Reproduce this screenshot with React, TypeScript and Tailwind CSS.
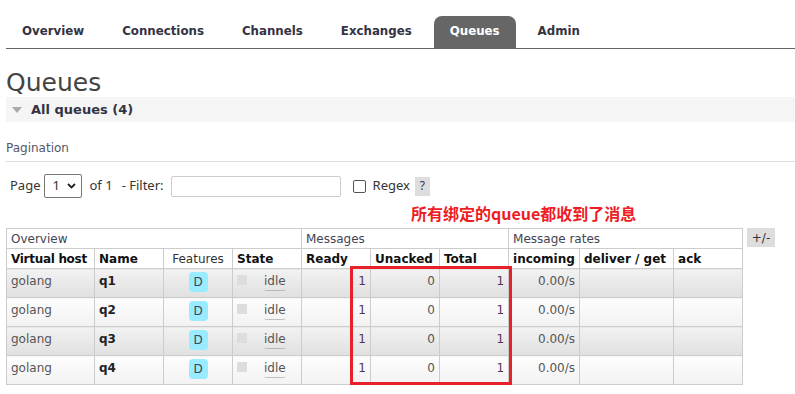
import React from "react";

const tabs = ["Overview", "Connections", "Channels", "Exchanges", "Queues", "Admin"];

const queues = [
  { vhost: "golang", name: "q1" },
  { vhost: "golang", name: "q2" },
  { vhost: "golang", name: "q3" },
  { vhost: "golang", name: "q4" },
];

function Tabs() {
  return (
    <div className="mt-[16px] ml-[6px] flex h-[33px] border-b border-[#666]">
      {tabs.map((t) => (
        <div
          key={t}
          className={`mr-[6px] flex h-[32px] items-center px-4 text-[11.8px] font-bold ${
            t === "Queues"
              ? "rounded-t-[8px] bg-[#666] text-white"
              : "text-[#333344]"
          }`}
        >
          {t}
        </div>
      ))}
    </div>
  );
}

function Chevron() {
  return (
    <svg width="9" height="6" viewBox="0 0 9 6" className="ml-[7px]">
      <path d="M1 1 L4.5 4.5 L8 1" fill="none" stroke="#222" strokeWidth="1.8" />
    </svg>
  );
}

function FilterRow() {
  return (
    <div
      className="mt-[12px] ml-[10px] flex h-[24px] items-center text-[13px] text-[#333]"
      style={{ fontFamily: '"Noto Sans", "Open Sans", sans-serif' }}
    >
      <span>Page</span>
      <div className="ml-[3px] flex h-[24px] w-[38px] items-center rounded-[2px] border border-[#767676] pl-[8px]">
        <span>1</span>
        <Chevron />
      </div>
      <span className="ml-[8px] text-[#334]">of 1</span>
      <span className="ml-[9px]">- Filter:</span>
      <div className="ml-[7px] h-[21px] w-[170px] rounded-[2px] border border-[#ccc]" />
      <div className="ml-[12px] h-[13px] w-[13px] rounded-[2px] border border-[#555]" />
      <span className="ml-[7px]">Regex</span>
      <span className="ml-[5px] flex h-[19px] w-[15px] items-center justify-center bg-[#ddd] text-[12px]">
        ?
      </span>
    </div>
  );
}

function QueueRow({ vhost, name, odd }: { vhost: string; name: string; odd: boolean }) {
  const cell = `h-[29px] border border-[#ccc] px-[4px] pt-[3px] align-top whitespace-nowrap ${
    odd
      ? "bg-gradient-to-b from-[#f2f2f2] to-[#e0e0e0]"
      : "bg-gradient-to-b from-[#fdfdfd] to-[#f2f2f2]"
  }`;
  return (
    <tr>
      <td className={cell}>{vhost}</td>
      <td className={`${cell} font-bold text-[#222]`}>{name}</td>
      <td className={`${cell} text-center`}>
        <span className="inline-flex h-[20px] w-[19px] items-center justify-center rounded-[4px] bg-[#99ebff] text-[#445]">
          D
        </span>
      </td>
      <td className={cell}>
        <div className="flex items-start">
          <span className="mt-[3px] h-[10px] w-[10px] bg-[#ddd]" />
          <span className="ml-[17px] rounded-b-[3px] border-b border-dotted border-[#888]">
            idle
          </span>
        </div>
      </td>
      <td className={`${cell} text-right text-[#535]`}>1</td>
      <td className={`${cell} text-right`}>0</td>
      <td className={`${cell} text-right text-[#535]`}>1</td>
      <td className={`${cell} text-right`}>0.00/s</td>
      <td className={cell}></td>
      <td className={cell}></td>
    </tr>
  );
}

function QueuesTable() {
  const h1 = "h-[20px] border border-[#ccc] px-[4px] text-left font-normal text-[#445] whitespace-nowrap";
  const h2 = "h-[20px] border border-[#ccc] px-[4px] text-left font-bold text-[#111] whitespace-nowrap overflow-hidden";
  return (
    <div className="relative mt-[4px] ml-[6px] flex items-start">
      <table className="w-[737px] table-fixed border-collapse text-[12px] text-[#555]">
        <colgroup>
          <col className="w-[88px]" />
          <col className="w-[69px]" />
          <col className="w-[69px]" />
          <col className="w-[69px]" />
          <col className="w-[69px]" />
          <col className="w-[69px]" />
          <col className="w-[69px]" />
          <col className="w-[71px]" />
          <col className="w-[94px]" />
          <col className="w-[69px]" />
        </colgroup>
        <thead>
          <tr>
            <th colSpan={4} className={h1}>Overview</th>
            <th colSpan={3} className={h1}>Messages</th>
            <th colSpan={3} className={h1}>Message rates</th>
          </tr>
          <tr>
            <th className={`${h2} tracking-[-0.3px]`}>Virtual host</th>
            <th className={h2}>Name</th>
            <th className={`${h2} !text-center !font-normal !text-[#333]`}>Features</th>
            <th className={h2}>State</th>
            <th className={h2}>Ready</th>
            <th className={h2}>Unacked</th>
            <th className={h2}>Total</th>
            <th className={h2}>incoming</th>
            <th className={h2}>deliver / get</th>
            <th className={h2}>ack</th>
          </tr>
        </thead>
        <tbody>
          {queues.map((q, i) => (
            <QueueRow key={q.name} vhost={q.vhost} name={q.name} odd={i % 2 === 0} />
          ))}
        </tbody>
      </table>
      <div className="ml-[4px] flex h-[19px] w-[28px] items-center justify-center bg-[#ddd] text-[12px] text-[#333]">
        +/-
      </div>
      {/* annotation box */}
      <div className="absolute left-[344px] top-[38px] h-[119px] w-[162px] border-[3px] border-[#e8202a]" />
    </div>
  );
}

export default function App() {
  return (
    <div
      className="h-[394px] w-[795px] overflow-hidden bg-white text-[12px] text-[#444]"
      style={{ fontFamily: '"DejaVu Sans", Verdana, sans-serif' }}
    >
      <Tabs />

      <h1 className="mt-[20px] ml-[6px] text-[25px] leading-[28px] font-normal text-[#444]">
        Queues
      </h1>
      <div className="ml-[6px] flex h-[25px] items-center bg-[#f5f5f5]">
        <svg width="10" height="6" viewBox="0 0 10 6" className="ml-[6px]">
          <path d="M0 0 L10 0 L5 6 Z" fill="#aaa" />
        </svg>
        <span className="ml-[9px] text-[13px] font-bold text-[#334]">All queues (4)</span>
      </div>

      <div className="mt-[17px] ml-[6px] border-b border-[#ddd] pb-[4px] text-[12px] text-[#556]">
        Pagination
      </div>

      <FilterRow />

      <div
        className="mt-[5px] ml-[411px] h-[21px] text-[16px] leading-[21px] font-bold text-[#ee1c25]"
        style={{ fontFamily: '"Noto Sans CJK SC", "Noto Sans", sans-serif' }}
      >
        所有绑定的queue都收到了消息
      </div>

      <QueuesTable />
    </div>
  );
}
